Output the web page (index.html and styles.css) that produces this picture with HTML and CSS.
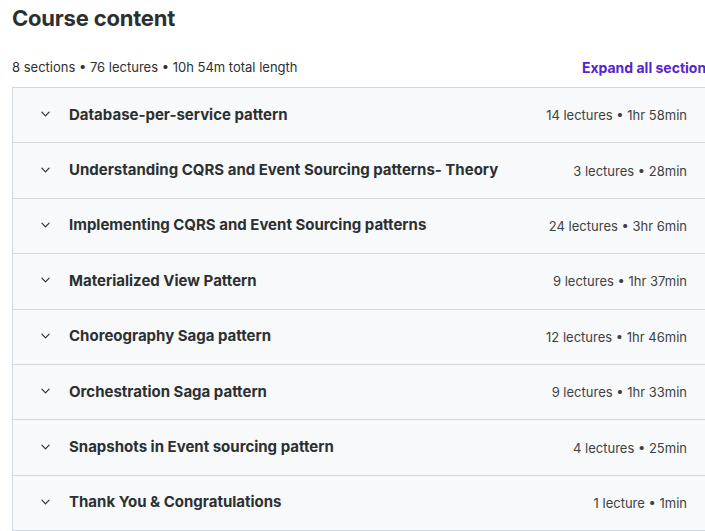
FILE: index.html
```html
<!DOCTYPE html>
<html lang="en">
<head>
<meta charset="utf-8">
<title>Course content</title>
<link rel="stylesheet" href="styles.css">
</head>
<body>
<div class="page">
  <h2 class="title">Course content</h2>
  <div class="meta">
    <span class="summary">8 sections • 76 lectures • 10h 54m total length</span>
    <button class="expand">Expand all sections</button>
  </div>
  <div class="sections">
    <div class="section">
      <div class="left"><svg class="chev" viewBox="0 0 10 6"><path d="M1 1 L5 5 L9 1"/></svg><span class="name">Database-per-service pattern</span></div>
      <span class="info">14 lectures • 1hr 58min</span>
    </div>
    <div class="section">
      <div class="left"><svg class="chev" viewBox="0 0 10 6"><path d="M1 1 L5 5 L9 1"/></svg><span class="name">Understanding CQRS and Event Sourcing patterns- Theory</span></div>
      <span class="info">3 lectures • 28min</span>
    </div>
    <div class="section">
      <div class="left"><svg class="chev" viewBox="0 0 10 6"><path d="M1 1 L5 5 L9 1"/></svg><span class="name">Implementing CQRS and Event Sourcing patterns</span></div>
      <span class="info">24 lectures • 3hr 6min</span>
    </div>
    <div class="section">
      <div class="left"><svg class="chev" viewBox="0 0 10 6"><path d="M1 1 L5 5 L9 1"/></svg><span class="name">Materialized View Pattern</span></div>
      <span class="info">9 lectures • 1hr 37min</span>
    </div>
    <div class="section">
      <div class="left"><svg class="chev" viewBox="0 0 10 6"><path d="M1 1 L5 5 L9 1"/></svg><span class="name">Choreography Saga pattern</span></div>
      <span class="info">12 lectures • 1hr 46min</span>
    </div>
    <div class="section">
      <div class="left"><svg class="chev" viewBox="0 0 10 6"><path d="M1 1 L5 5 L9 1"/></svg><span class="name">Orchestration Saga pattern</span></div>
      <span class="info">9 lectures • 1hr 33min</span>
    </div>
    <div class="section">
      <div class="left"><svg class="chev" viewBox="0 0 10 6"><path d="M1 1 L5 5 L9 1"/></svg><span class="name">Snapshots in Event sourcing pattern</span></div>
      <span class="info">4 lectures • 25min</span>
    </div>
    <div class="section">
      <div class="left"><svg class="chev" viewBox="0 0 10 6"><path d="M1 1 L5 5 L9 1"/></svg><span class="name">Thank You &amp; Congratulations</span></div>
      <span class="info">1 lecture • 1min</span>
    </div>
  </div>
</div>
</body>
</html>
```
FILE: styles.css
```css
html, body {
  margin: 0;
  padding: 0;
  background: #ffffff;
  overflow: hidden;
}
body {
  font-family: Inter, "Noto Sans", "Liberation Sans", sans-serif;
  color: #2d2f31;
}
.page {
  width: 702px;
  padding-left: 12px;
}
.title {
  margin: 0;
  padding-top: 3px;
  font-size: 22px;
  line-height: 30px;
  font-weight: 700;
  letter-spacing: -0.2px;
  color: #2d2f31;
}
.meta {
  display: flex;
  justify-content: space-between;
  align-items: center;
  margin-top: 24px;
  height: 20px;
  margin-bottom: 10px;
}
.summary {
  font-size: 13px;
  color: #2d2f31;
}
.expand {
  border: none;
  background: none;
  padding: 0;
  font-family: inherit;
  font-size: 14px;
  font-weight: 700;
  color: #5624d0;
  white-space: nowrap;
}
.sections {
  border: 1px solid #d1d7dc;
  border-right: none;
}
.section {
  display: flex;
  justify-content: space-between;
  align-items: center;
  height: 54.4px;
  background: #f7f9fa;
  border-bottom: 1px solid #d1d7dc;
  padding: 0 27px 0 28px;
}
.section:last-child {
  border-bottom: none;
}
.left {
  display: flex;
  align-items: center;
  margin-top: -2px;
}
.chev {
  width: 9px;
  height: 6px;
  margin-right: 19px;
  fill: none;
  stroke: #2d2f31;
  stroke-width: 1.3;
  stroke-linecap: round;
  stroke-linejoin: round;
}
.name {
  font-size: 15px;
  font-weight: 700;
  color: #2d2f31;
}
.info {
  font-size: 13px;
  color: #3e4143;
}
```
